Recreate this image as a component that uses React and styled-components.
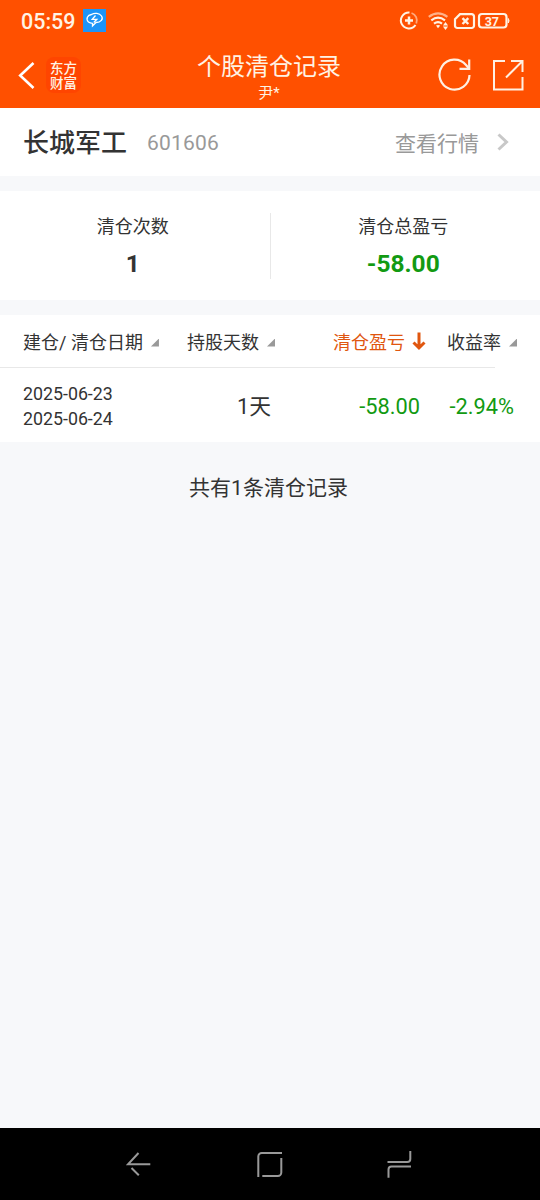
import styled, { createGlobalStyle } from "styled-components";

const columns = [
  { title: "建仓/ 清仓日期" },
  { title: "持股天数" },
  { title: "清仓盈亏", active: true },
  { title: "收益率" },
];

const records = [
  {
    opened: "2025-06-23",
    closed: "2025-06-24",
    days: "1天",
    profit: "-58.00",
    rate: "-2.94%",
  },
];

const StatusIcons = () => (
  <svg width="112" height="22" viewBox="399 10 112 22" fill="none" stroke="#fff3e4">
    <path d="M409.500 12.500A8 8 0 1 0 415.500 25" strokeWidth="2" />
    <path d="M411.500 13A8 8 0 0 1 416.300 23.500" strokeWidth="1.800" opacity="0.550" />
    <path d="M409 16.500v8M405 20.500h8" strokeWidth="2.500" />

    <path d="M428.800 16.800Q438 9.800 447.400 16.800" strokeWidth="2.200" opacity="0.600" />
    <path d="M431.300 20.300Q438 15.100 445 20.300M434 23.700Q438 20.700 442 23.700" strokeWidth="2.200" />
    <path d="M436 25.600Q438 24.200 440.200 25.600L438 28.200z" fill="#fff3e4" stroke="none" />
    <path d="M445.500 22l2.600 3.500h-5.200zM445.500 30l2.600-3.500h-5.200z" fill="#fff3e4" stroke="none" />

    <path
      d="M460 14.200H471.700a2.300 2.300 0 0 1 2.300 2.300v9.200a2.300 2.300 0 0 1-2.300 2.300H457.300a2.300 2.300 0 0 1-2.300-2.300V19.200z"
      strokeWidth="2.200"
    />
    <path d="M462.500 18.200l5.800 5.800M468.300 18.200l-5.800 5.800" strokeWidth="2.400" />

    <rect x="479" y="14" width="27.500" height="13.500" rx="3" strokeWidth="2.200" />
    <path d="M508.300 18.500q1.500 2.200 0 4.500z" fill="#fff3e4" strokeWidth="1" />
    <text
      x="491.800"
      y="25.500"
      fill="#fff3e4"
      stroke="none"
      textAnchor="middle"
      fontSize="12.500"
      fontWeight="700"
      fontFamily="Roboto, sans-serif"
    >
      37
    </text>
  </svg>
);

const App = () => {
  return (
    <>
      <GlobalStyle />
      <Screen>
        <StatusBar>
          <Clock>05:59</Clock>
          <Notification>
            <svg width="23" height="23" viewBox="0 0 23 23" fill="none" stroke="#fff">
              <path
                d="M5.500 13C2.500 10 4.500 6 8.500 5.500C11.500 3.500 16.500 4 18.500 7C20.500 10 18 13.500 13 13.500L9.500 17V14.300Q7 14.300 5.500 13z"
                strokeWidth="1.300"
              />
              <path d="M12.500 6.500l-3.300 3.800h4.600l-3 3.200" strokeWidth="1.300" />
            </svg>
          </Notification>
          <StatusIcons />
        </StatusBar>

        <Header>
          <BackButton aria-label="返回">
            <svg width="18" height="28" viewBox="0 0 18 28" fill="none">
              <path d="M15.500 2L2.200 14.500L15.500 27" stroke="#fff" strokeWidth="2.600" />
            </svg>
          </BackButton>
          <Brand>
            东方
            <br />
            财富
          </Brand>
          <Heading>
            <Title>个股清仓记录</Title>
            <UserName>尹*</UserName>
          </Heading>
          <Tools>
            <svg width="34" height="34" viewBox="437 58 34 34" fill="none" stroke="#fff0e2" strokeWidth="2.200">
              <path d="M469.500 75A15 15 0 1 1 466 65L469 68.500" />
              <path d="M469.200 59.500v9.300h-9.700" />
            </svg>
            <svg width="32" height="32" viewBox="492 59 32 32" fill="none" stroke="#fff0e2" strokeWidth="2">
              <path d="M505 61H494v28.500h28.500V77" />
              <path d="M511 61h11.500v11M522.500 61L506 77.500" />
            </svg>
          </Tools>
        </Header>

        <StockBar>
          <StockName>长城军工</StockName>
          <StockCode>601606</StockCode>
          <QuoteLink>
            查看行情
            <svg width="14" height="18" viewBox="0 0 14 18" fill="none">
              <path d="M2.500 1.500L10.500 9L2.500 16.500" stroke="#c8c8c8" strokeWidth="3" />
            </svg>
          </QuoteLink>
        </StockBar>

        <Summary>
          <SummaryItem>
            <SummaryLabel>清仓次数</SummaryLabel>
            <SummaryValue>1</SummaryValue>
          </SummaryItem>
          <Divider />
          <SummaryItem>
            <SummaryLabel>清仓总盈亏</SummaryLabel>
            <SummaryValue $loss>-58.00</SummaryValue>
          </SummaryItem>
        </Summary>

        <Table>
          <TableHead>
            {columns.map((column) => (
              <HeadCell key={column.title} $active={column.active}>
                {column.title}
                {column.active ? (
                  <svg width="14" height="18" viewBox="0 0 14 18" fill="none">
                    <path d="M7 0.500V16M1.500 10.500L7 15.800L12.500 10.500" stroke="#e0560f" strokeWidth="3" />
                  </svg>
                ) : (
                  <SortMark />
                )}
              </HeadCell>
            ))}
          </TableHead>
          <HeadLine />
          {records.map((record) => (
            <Row key={record.opened}>
              <Dates>
                <span>{record.opened}</span>
                <span>{record.closed}</span>
              </Dates>
              <Days>{record.days}</Days>
              <Cell>{record.profit}</Cell>
              <Cell>{record.rate}</Cell>
            </Row>
          ))}
        </Table>

        <Total>共有{records.length}条清仓记录</Total>

        <NavBar>
          <svg width="28" height="28" viewBox="126 1150 28 28">
            <path d="M150.300 1164.300H128L138.500 1153M131.500 1168l7.300 7.300" />
          </svg>
          <svg width="28" height="28" viewBox="256 1150 28 28">
            <path d="M258.300 1177v-20.500a3.500 3.500 0 0 1 3.500-3.500H282M281.300 1158v14.500a3.500 3.500 0 0 1-3.500 3.500H262.300" />
          </svg>
          <svg width="28" height="30" viewBox="386 1149 28 30">
            <path d="M410.300 1151v8a3 3 0 0 1-3 3H387.500M411 1166.500H391.500a3 3 0 0 0-3 3v8.300" />
          </svg>
        </NavBar>
      </Screen>
    </>
  );
};

export default App;

const GlobalStyle = createGlobalStyle`
  * {
    box-sizing: border-box;
  }

  body {
    margin: 0;
    font-family: Roboto, "Noto Sans CJK SC", sans-serif;
    color: #333;
  }

  svg {
    display: block;
    flex-shrink: 0;
  }
`;

const Screen = styled.div`
  width: 540px;
  height: 1200px;
  display: flex;
  flex-direction: column;
  background-color: #f7f8fa;
  white-space: nowrap;
`;

const StatusBar = styled.div`
  height: 42px;
  padding: 0 29px 0 21px;
  display: flex;
  align-items: center;
  background-color: #ff5000;

  > svg:last-child {
    margin-left: auto;
  }
`;

const Clock = styled.span`
  width: 62px;
  padding-top: 1px;
  color: #fff3e4;
  font-size: 21.5px;
  font-weight: 500;
`;

const Notification = styled.div`
  width: 23px;
  height: 23px;
  margin-bottom: 1px;
  background-color: #1d94f7;
`;

const Header = styled.header`
  height: 66px;
  padding: 0 16px 0 18px;
  display: grid;
  grid-template-columns: 28px 36px 1fr 87px;
  align-items: center;
  background-color: #ff5000;
  color: #fff3e4;
`;

const BackButton = styled.button`
  padding: 0;
  border: none;
  background-color: transparent;
  cursor: pointer;
`;

const Brand = styled.div`
  width: 35px;
  height: 36px;
  padding-top: 3px;
  border-radius: 8px;
  background-color: #ff4500;
  font-family: "Noto Sans CJK SC", sans-serif;
  font-size: 13.5px;
  font-weight: 500;
  line-height: 15px;
  text-align: center;
`;

const Heading = styled.div`
  display: flex;
  flex-direction: column;
  align-items: center;
  padding-top: 5px;
  padding-left: 19px;
`;

const Title = styled.h1`
  margin: 0;
  font-size: 24px;
  font-weight: 400;
  line-height: 30px;
`;

const UserName = styled.span`
  font-size: 15px;
  line-height: 22px;
`;

const Tools = styled.div`
  display: flex;
  align-items: center;
  justify-content: space-between;
`;

const StockBar = styled.section`
  height: 68px;
  padding: 0 30px 0 23px;
  display: flex;
  align-items: center;
  background-color: white;
`;

const StockName = styled.h2`
  margin: 0 20px 0 0;
  padding-bottom: 3px;
  font-size: 26px;
  font-weight: 500;
`;

const StockCode = styled.span`
  padding-top: 2px;
  color: #999;
  font-size: 21px;
  letter-spacing: 0.2px;
`;

const QuoteLink = styled.a`
  margin-left: auto;
  display: flex;
  align-items: center;
  gap: 17px;
  color: #999;
  font-size: 21px;
`;

const Summary = styled.section`
  height: 109px;
  margin: 15px 0;
  display: flex;
  align-items: center;
  background-color: white;
`;

const SummaryItem = styled.div`
  flex: 1;
  display: flex;
  flex-direction: column;
  align-items: center;
  padding-top: 7px;
  padding-right: 4px;
`;

const SummaryLabel = styled.span`
  font-size: 18px;
  line-height: 30px;
`;

const SummaryValue = styled.strong`
  font-size: 24.5px;
  font-weight: 700;
  line-height: 44px;
  color: ${(props) => (props.$loss ? "#129a12" : "#333")};
`;

const Divider = styled.div`
  width: 1px;
  height: 66px;
  background-color: #e8e8e8;
`;

const Table = styled.section`
  height: 127px;
  background-color: white;
`;

const TableHead = styled.div`
  height: 52px;
  padding-left: 23px;
  display: grid;
  grid-template-columns: 164px 146px 114px 1fr;
  align-items: center;
`;

const HeadCell = styled.div`
  display: flex;
  align-items: center;
  gap: ${(props) => (props.$active ? "7px" : "8px")};
  font-size: 18px;
  color: ${(props) => (props.$active ? "#e0560f" : "#333")};
`;

const SortMark = styled.span`
  width: 8px;
  height: 8px;
  margin-top: 3px;
  background-color: #999;
  clip-path: polygon(100% 0, 100% 100%, 0 100%);
`;

const HeadLine = styled.div`
  width: 495px;
  height: 1px;
  background-color: #e8e8e8;
`;

const Row = styled.div`
  height: 74px;
  padding: 2px 26px 0 23px;
  display: grid;
  grid-template-columns: 90px 158px 149px 94px;
  align-items: center;
`;

const Dates = styled.div`
  display: flex;
  flex-direction: column;
  font-size: 17.8px;
  line-height: 25px;
`;

const Cell = styled.span`
  font-size: 21.8px;
  text-align: right;
  color: #129a12;
`;

const Days = styled(Cell)`
  padding-bottom: 3px;
  color: #333;
`;

const Total = styled.p`
  margin: 30px 0 0;
  padding-right: 3px;
  font-size: 21px;
  line-height: 32px;
  text-align: center;
`;

const NavBar = styled.nav`
  height: 72px;
  margin-top: auto;
  padding: 0 126px;
  display: flex;
  align-items: center;
  justify-content: space-between;
  background-color: black;

  path {
    fill: none;
    stroke: #999;
    stroke-width: 2;
  }
`;
